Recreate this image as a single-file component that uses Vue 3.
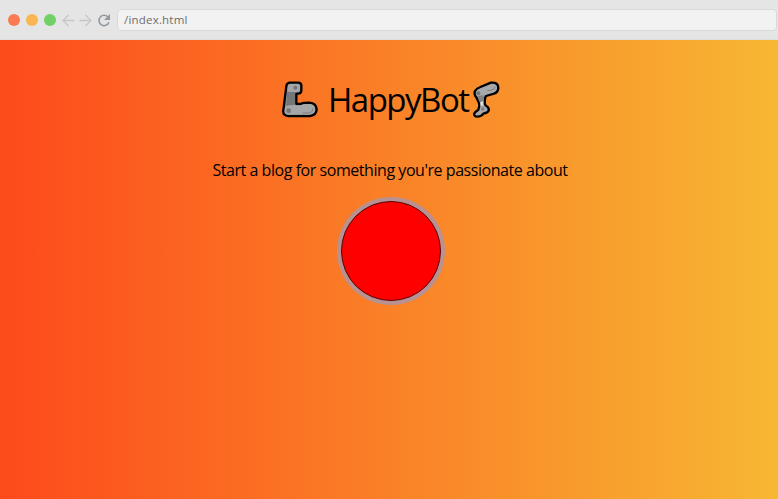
<script setup>
const title = 'HappyBot'
const idea = "Start a blog for something you're passionate about"
</script>

<template>
  <div class="window">
    <header class="bar">
      <div class="lights"><i class="red"></i><i class="yellow"></i><i class="green"></i></div>
      <svg class="nav" viewBox="0 0 50 16" width="50" height="16" fill="none">
        <path d="M13.500 8.500H2M7.500 3L2 8.500L7.500 14M18.500 8.500H30M24.500 3L30 8.500L24.500 14" stroke="#c5c8ca" stroke-width="1.300" />
        <path d="M47.300 5.300A5.200 5.200 0 1 0 48 10.300" stroke="#929ba2" stroke-width="1.600" />
        <path d="M49 2V8H43Z" fill="#929ba2" />
      </svg>
      <div class="address">/index.html</div>
    </header>
    <main class="page">
      <h1 class="title">
        <svg class="arm" viewBox="35 34 111 111" width="37" height="37">
          <path d="M58 39Q49 40 48 50L39 122Q37 139 54 139H119Q139 136 139 119Q137 100 117 99Q98 99 91 103H78V72H85Q93 71 93 62V47Q93 39 83 39Z" fill="#98999a" stroke="#000" stroke-width="7" stroke-linejoin="round" />
          <path d="M51 66H74V103L64 111L47 109Z" fill="#747678" />
          <path d="M57 43H82Q89 45 89 51V59Q88 67 79 67H57Q51 65 52 55Q52 46 57 43M55 107H90Q99 103 117 103Q134 105 134 119Q133 135 115 135H55Q43 134 43 122Q44 108 55 107" fill="#a5a6a7" />
          <circle cx="75" cy="54" r="6" fill="#727476" />
          <circle cx="55" cy="123" r="7" fill="#727476" />
          <path d="M97 130H113Q127 130 127 117" fill="none" stroke="#747678" stroke-width="2.500" />
        </svg>
        <span class="name">{{ title }}</span>
        <svg class="leg" viewBox="40 34 81 111" width="27" height="37">
          <path d="M94 39Q112 37 115 49Q119 66 103 72L79 79L76 86L75 102Q76 107 84 112Q91 120 84 127Q78 131 72 131Q65 141 53 141Q42 140 44 131Q47 126 56 120L59 108L58 100L50 83Q42 75 46 64Q50 56 62 52Z" fill="#a8a9aa" stroke="#000" stroke-width="7" stroke-linejoin="round" />
          <path d="M53 79L73 77L72 93L61 98Z" fill="#808284" />
          <path d="M62 98L71 95L71 106L63 110Z" fill="#dedfe0" />
          <circle cx="56" cy="71" r="6" fill="#747678" />
          <circle cx="69" cy="118" r="5" fill="#7b7d7f" />
          <path d="M83 63L97 61Q106 59 106 51" fill="none" stroke="#747678" stroke-width="2.500" />
        </svg>
      </h1>
      <p class="idea">{{ idea }}</p>
      <button class="push" aria-label="New idea"></button>
    </main>
  </div>
</template>

<style>
body { margin: 0; }
</style>

<style scoped>
.window { height: 499px; display: flex; flex-direction: column; overflow: hidden; }
.bar { box-sizing: border-box; height: 40px; flex: none; display: flex; align-items: center; padding: 0 1px 0 8px; background: #e5e5e5; border-bottom: 1px solid #dedede; }
.lights { display: flex; gap: 6px; }
.lights i { width: 12px; height: 12px; border-radius: 50%; }
.red { background: #fa7b53; }
.yellow { background: #f9b552; }
.green { background: #71d066; }
.nav { margin-left: 5px; flex: none; }
.address { box-sizing: border-box; flex: 1; height: 22px; margin-left: 6px; padding: 0 6px; border: 1px solid #d9d9d9; border-radius: 4px; background: #f2f2f2; color: #6d6d6d; font: 11.5px/20px "Open Sans", sans-serif; letter-spacing: 0.2px; }
.page { flex: 1; display: flex; flex-direction: column; align-items: center; padding-left: 4px; background: linear-gradient(to right, #fd4a1b, #f7b733); color: #000; font-family: "Open Sans", sans-serif; }
.title { display: flex; align-items: center; height: 37px; margin: 41px 0 0; font-size: 33px; font-weight: 400; line-height: 37px; }
.name { width: 144px; margin-left: 9px; letter-spacing: -1.5px; white-space: nowrap; }
.arm, .leg { flex: none; }
.leg { margin-left: 1px; }
.idea { margin: 41px 2px 0 0; font-size: 16px; line-height: 22px; letter-spacing: -0.45px; white-space: nowrap; }
.push { box-sizing: border-box; width: 100px; height: 100px; margin-top: 20px; padding: 0; border: 1px solid #50090a; border-radius: 50%; background: #f00; box-shadow: 0 0 0 4px #b99191; }
</style>
